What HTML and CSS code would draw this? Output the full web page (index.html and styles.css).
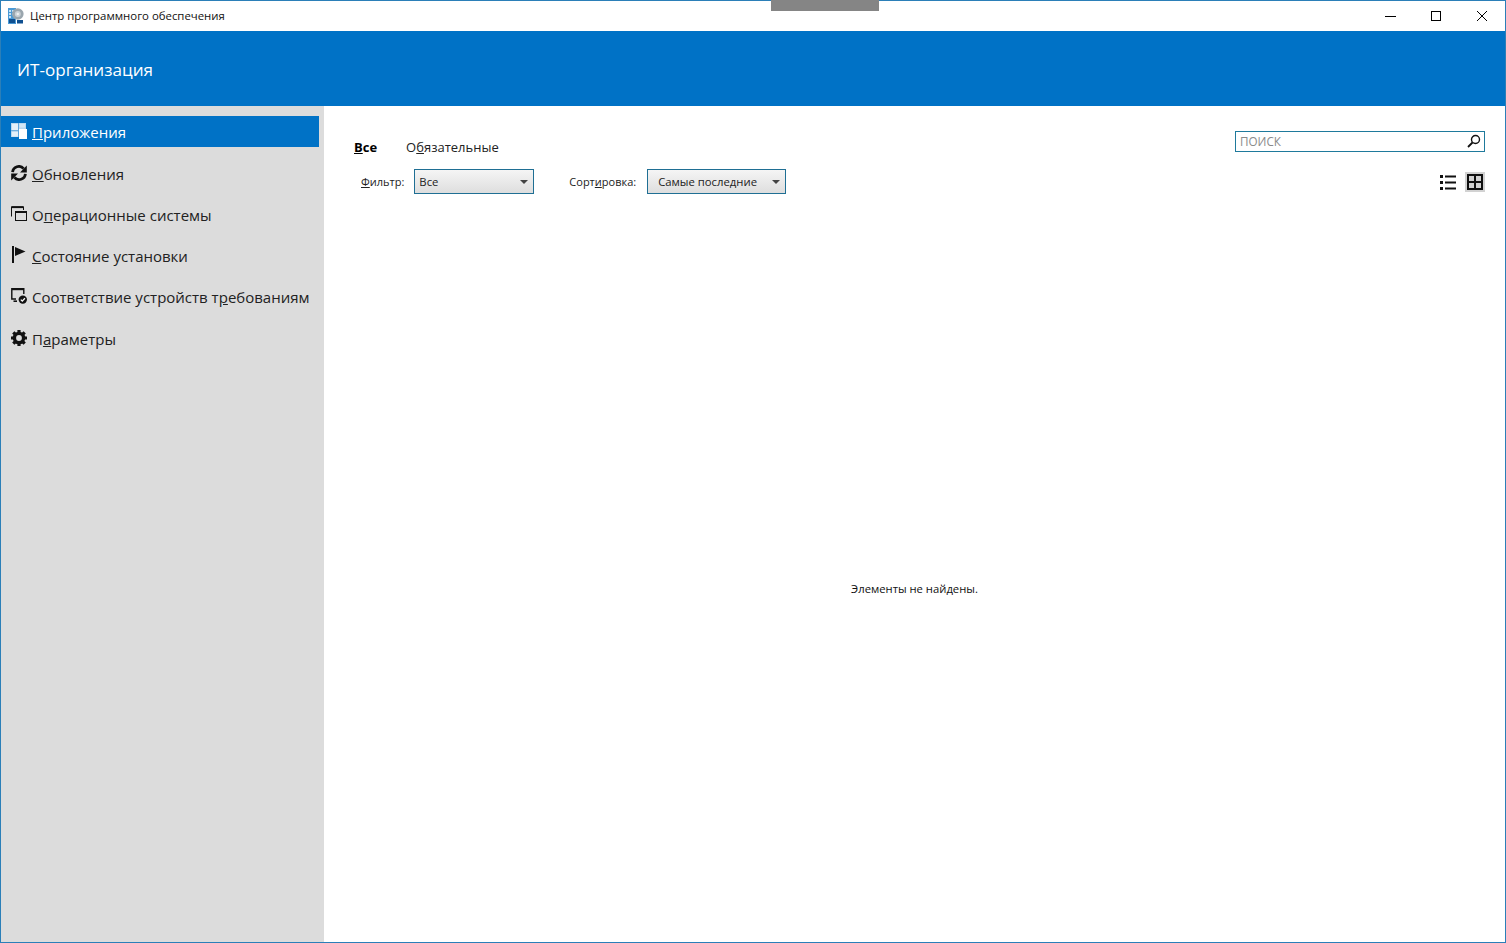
FILE: index.html
```html
<!DOCTYPE html>
<html lang="ru">
<head>
<meta charset="utf-8">
<title>Центр программного обеспечения</title>
<link rel="stylesheet" href="styles.css">
</head>
<body>
<div class="window">
  <div class="grip"></div>
  <header class="titlebar">
    <svg class="app-icon" width="16" height="16" viewBox="0 0 16 16">
      <rect x="0" y="0" width="8" height="16" fill="#4a9ad6"/>
      <path d="M1 2h2v2H1zM4 2h2v2H4zM1 5h2v2H1zM4 5h2v2H4zM1 8h2v2H1z" fill="#c5e2f6"/>
      <rect x="1" y="11" width="6" height="4" fill="#0f4f90"/>
      <circle cx="9.8" cy="6" r="5.8" fill="#9aa6ae"/>
      <circle cx="9.8" cy="6" r="3" fill="#c9d0d5"/>
      <circle cx="9.8" cy="6" r="1.2" fill="#eef1f2"/>
      <rect x="9" y="12" width="6" height="3.5" fill="#0f4f90"/>
    </svg>
    <span class="title-text">Центр программного обеспечения</span>
    <div class="win-controls">
      <svg class="win-btn" width="46" height="30" viewBox="0 0 46 30"><path d="M18 15.5h11" stroke="#000" fill="none"/></svg>
      <svg class="win-btn" width="46" height="30" viewBox="0 0 46 30"><rect x="18.5" y="10.5" width="9" height="9" stroke="#000" fill="none"/></svg>
      <svg class="win-btn" width="46" height="30" viewBox="0 0 46 30"><path d="M18 10l10 10M28 10L18 20" stroke="#000" fill="none"/></svg>
    </div>
  </header>
  <div class="brand">ИТ-организация</div>
  <div class="body">
    <nav class="sidebar">
      <a class="nav-item active">
        <svg class="nav-icon" width="16" height="16" viewBox="0 0 16 16"><rect width="15" height="14" fill="#b9d8ef"/><path d="M1 1h6v6H1zM1 8.5h6v5H1z" fill="#e3f0f9"/><path d="M8.5 1h5.5v3.5H8.5z" fill="#d2e6f5"/><path d="M7.5 0v14M0 7.7h8" stroke="#5fa6dc" stroke-width="1"/><rect x="8" y="6" width="8" height="10" fill="#fff"/></svg>
        <span><u>П</u>риложения</span>
      </a>
      <a class="nav-item">
        <svg class="nav-icon" width="16" height="16" viewBox="0 0 16 16"><path d="M1.6 7.2A6.3 6.3 0 0 1 12.6 3.6" fill="none" stroke="#111" stroke-width="2.8"/><path d="M15.8.6v6.8H9z" fill="#111"/><path d="M14.4 8.8A6.3 6.3 0 0 1 3.4 12.4" fill="none" stroke="#111" stroke-width="2.8"/><path d="M.2 15.4V8.6H7z" fill="#111"/></svg>
        <span><u>О</u>бновления</span>
      </a>
      <a class="nav-item">
        <svg class="nav-icon" width="16" height="16" viewBox="0 0 16 16"><path d="M.5 10.5V.8h12V4" fill="none" stroke="#111"/><path d="M.5 1.2h12" stroke="#111" stroke-width="1.8"/><rect x="4.5" y="5.5" width="11" height="9" fill="#dcdcdc" stroke="#111"/><path d="M4.5 6h11" stroke="#111" stroke-width="2"/></svg>
        <span>О<u>п</u>ерационные системы</span>
      </a>
      <a class="nav-item">
        <svg class="nav-icon" width="16" height="17" viewBox="0 0 16 17"><rect x="1" y="0" width="2" height="17" fill="#111"/><path d="M4 1l10.5 4.5L4 10z" fill="#111"/></svg>
        <span><u>С</u>остояние установки</span>
      </a>
      <a class="nav-item">
        <svg class="nav-icon" width="16" height="16" viewBox="0 0 16 16"><path d="M5 11H.8V.8h12V6" fill="none" stroke="#111" stroke-width="1.4"/><path d="M2.5 13.2H6" stroke="#111" stroke-width="1.6"/><path d="M1 1.4h12" stroke="#111" stroke-width="1.6"/><circle cx="11.8" cy="11.6" r="4.2" fill="#111"/><path d="M9.8 11.6l1.5 1.5 2.6-2.8" fill="none" stroke="#fff" stroke-width="1.3"/></svg>
        <span>Соответствие устройств т<u>р</u>ебованиям</span>
      </a>
      <a class="nav-item">
        <svg class="nav-icon" width="16" height="16" viewBox="0 0 16 16"><circle cx="8" cy="8" r="4.6" fill="none" stroke="#111" stroke-width="3.4"/><path d="M8 0v3M8 13v3M0 8h3M13 8h3M2.3 2.3l2.2 2.2M11.5 11.5l2.2 2.2M13.7 2.3l-2.2 2.2M4.5 11.5l-2.2 2.2" stroke="#111" stroke-width="3.2"/></svg>
        <span>П<u>а</u>раметры</span>
      </a>
    </nav>
    <main class="content">
      <div class="toolbar">
        <div class="controls">
          <div class="tabs">
            <span class="tab tab-current"><u>В</u>се</span>
            <span class="tab">О<u>б</u>язательные</span>
          </div>
          <div class="filters">
            <label class="filter-label filter-label-first"><u>Ф</u>ильтр:</label>
            <div class="select select-filter"><span>Все</span><i class="caret"></i></div>
            <label class="filter-label filter-label-sort">Сорт<u>и</u>ровка:</label>
            <div class="select select-sort"><span>Самые последние</span><i class="caret"></i></div>
          </div>
        </div>
        <div class="side-tools">
          <div class="search">
            <span class="search-text">ПОИСК</span>
            <svg width="14" height="14" viewBox="0 0 14 14"><circle cx="8.5" cy="5.5" r="4" fill="none" stroke="#111" stroke-width="1.4"/><path d="M5.5 8.5L1 13" stroke="#111" stroke-width="1.8"/></svg>
          </div>
          <div class="views">
            <svg class="view-btn" width="20" height="20" viewBox="0 0 20 20"><path d="M2 3h3v3H2zM2 9h3v3H2zM2 15h3v3H2z" fill="#111"/><path d="M7 4.5h11M7 10.5h11M7 16.5h11" stroke="#111" stroke-width="2"/></svg>
            <svg class="view-btn view-on" width="20" height="20" viewBox="0 0 20 20"><rect width="20" height="20" fill="#d2d2d2"/><rect x="3" y="3" width="14" height="14" fill="none" stroke="#111" stroke-width="2"/><path d="M10 3v14M3 10h14" stroke="#111" stroke-width="2"/></svg>
          </div>
        </div>
      </div>
      <div class="empty">Элементы не найдены.</div>
    </main>
  </div>
</div>
</body>
</html>
```
FILE: styles.css
```css
* { box-sizing: border-box; }
html, body { margin: 0; height: 100%; }
body { font-family: "Open Sans", "Noto Sans", sans-serif; color: #111; background: #fff; overflow: hidden; }
.window { position: relative; width: 1506px; height: 943px; border: 1px solid #2b7fb8; display: flex; flex-direction: column; background: #fff; }
.grip { position: absolute; left: 770px; top: -1px; width: 108px; height: 11px; background: #858585; }
.titlebar { height: 30px; flex: none; display: flex; align-items: center; padding-left: 7px; background: #fff; }
.app-icon { flex: none; }
.title-text { margin-left: 6px; font-size: 11.4px; color: #111; position: relative; top: -1px; }
.win-controls { margin-left: auto; display: flex; margin-right: 0; }
.win-btn { display: block; }
.brand { height: 75px; flex: none; background: #0072c6; color: #fff; font-size: 17.1px; padding: 2px 0 0 16px; display: flex; align-items: center; }
.body { flex: 1; display: flex; min-height: 0; }
.sidebar { width: 323px; flex: none; background: #dcdcdc; padding: 10px 5px 0 0; display: flex; flex-direction: column; gap: 10px; }
.nav-item { height: 31px; display: flex; align-items: center; padding-left: 10px; font-size: 15px; color: #222; white-space: nowrap; }
.nav-item:nth-child(4n+1) { margin-bottom: 1px; }
.nav-item.active { background: #0072c6; color: #fff; }
.nav-icon { flex: none; margin-right: 5px; position: relative; top: -1px; }
.content { flex: 1; display: flex; flex-direction: column; min-width: 0; }
.toolbar { display: flex; justify-content: space-between; padding: 25px 20px 0 29px; }
.tabs { display: flex; gap: 29px; font-size: 13px; height: 38px; padding: 7px 0 0 1px; }
.tab { color: #222; }
.tab-current { font-weight: 700; color: #000; }
.filters { display: flex; align-items: center; font-size: 11.3px; color: #222; height: 25px; }
.filter-label-first { margin-left: 8px; font-size: 11px; }
.filter-label-sort { margin-left: 35px; font-size: 11px; }
.select { height: 25px; margin-left: 10px; border: 1px solid #1f6f94; background: linear-gradient(#f5f5f5, #dedede); display: flex; align-items: center; position: relative; }
.select-filter { width: 120px; padding-left: 4px; }
.select-sort { width: 139px; padding-left: 10px; margin-left: 11px; }
.caret { position: absolute; right: 5px; top: 10px; border: 4.5px solid transparent; border-top: 4.5px solid #444; border-bottom: 0; }
.side-tools { display: flex; flex-direction: column; align-items: flex-end; }
.search { width: 250px; height: 21px; border: 1px solid #1f7a9c; display: flex; align-items: center; justify-content: space-between; padding: 0 3px 2px 4px; }
.search-text { font-size: 11.7px; color: #8a8a8a; }
.views { display: flex; gap: 7px; margin-top: 20px; }
.view-btn { display: block; }
.empty { flex: 1; display: flex; align-items: center; justify-content: center; font-size: 11.25px; color: #111; padding-top: 40px; }
```
